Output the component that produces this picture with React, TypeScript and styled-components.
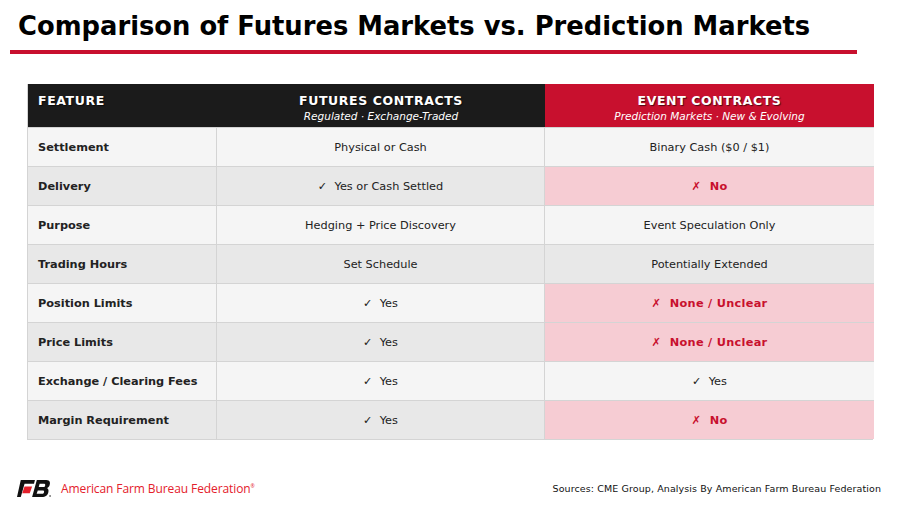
import React from 'react';
import styled, {createGlobalStyle} from 'styled-components';

const GlobalStyle = createGlobalStyle`
	html, body {
		margin: 0;
		padding: 0;
		background: #ffffff;
	}
	body {
		font-family: 'DejaVu Sans', Verdana, sans-serif;
		color: #222222;
	}
`;

const RED = '#c8102e';

const Page = styled.div`
	width: 900px;
	height: 506px;
	box-sizing: border-box;
	display: flex;
	flex-direction: column;
	overflow: hidden;
`;

const Header = styled.header`
	padding: 8px 43px 0 10px;
`;

const Title = styled.h1`
	margin: 0 0 0 8px;
	font-size: 25.8px;
	font-weight: bold;
	color: #000000;
	line-height: 36px;
	letter-spacing: 0;
`;

const Rule = styled.div`
	height: 4px;
	background: ${RED};
	margin-top: 6px;
`;

const Table = styled.div`
	margin: 30px 27px 0 27px;
	display: grid;
	grid-template-columns: 189px 328px 329px;
	border: 1px solid #d4d4d4;
	border-top: none;
`;

const HeadCell = styled.div<{$tone: 'dark' | 'red'; $align: 'left' | 'center'}>`
	height: 43px;
	box-sizing: border-box;
	background: ${p => (p.$tone === 'dark' ? '#1b1b1b' : RED)};
	color: #ffffff;
	display: flex;
	flex-direction: column;
	align-items: ${p => (p.$align === 'left' ? 'flex-start' : 'center')};
	justify-content: flex-start;
	padding: ${p => (p.$align === 'left' ? '9px 0 0 10px' : '9px 0 0 0')};
`;

const HeadTitle = styled.span`
	font-size: 12.5px;
	font-weight: bold;
	letter-spacing: 0.6px;
	line-height: 16px;
	text-shadow: 1px 1px 1px rgba(0, 0, 0, 0.6);
`;

const HeadSub = styled.span`
	font-size: 10.5px;
	font-style: italic;
	line-height: 15px;
`;

const Cell = styled.div<{$shade: 'light' | 'dark' | 'pink'; $label?: boolean}>`
	height: 39px;
	box-sizing: border-box;
	border-top: 1px solid #d4d4d4;
	border-right: 1px solid #d4d4d4;
	display: flex;
	align-items: center;
	justify-content: ${p => (p.$label ? 'flex-start' : 'center')};
	padding-left: ${p => (p.$label ? '10px' : '0')};
	font-size: 11.3px;
	font-weight: ${p => (p.$label ? 'bold' : 'normal')};
	color: #222222;
	white-space: pre;
	background: ${p =>
		p.$shade === 'pink' ? '#f6ccd3' : p.$shade === 'dark' ? '#e8e8e8' : '#f5f5f5'};
	&:nth-child(3n) {
		border-right: none;
	}
`;

const Bad = styled.span`
	color: ${RED};
	font-weight: bold;
	letter-spacing: 0.3px;
`;

const Footer = styled.footer`
	margin-top: auto;
	height: 32px;
	display: flex;
	align-items: center;
	justify-content: space-between;
	padding: 0 19px 2px 17px;
`;

const Brand = styled.div`
	display: flex;
	align-items: center;
	gap: 10px;
`;

const BrandName = styled.span`
	font-family: 'Open Sans', 'Noto Sans', sans-serif;
	font-size: 12px;
	color: #e4202b;
	letter-spacing: -0.1px;
`;

const Sources = styled.span`
	font-size: 9.5px;
	color: #111111;
	letter-spacing: 0.1px;
`;

type Row = {
	label: string;
	futures: string;
	event: string;
	eventBad?: boolean;
};

const rows: Row[] = [
	{label: 'Settlement', futures: 'Physical or Cash', event: 'Binary Cash ($0 / $1)'},
	{label: 'Delivery', futures: '✓  Yes or Cash Settled', event: '✗  No', eventBad: true},
	{label: 'Purpose', futures: 'Hedging + Price Discovery', event: 'Event Speculation Only'},
	{label: 'Trading Hours', futures: 'Set Schedule', event: 'Potentially Extended'},
	{label: 'Position Limits', futures: '✓  Yes', event: '✗  None / Unclear', eventBad: true},
	{label: 'Price Limits', futures: '✓  Yes', event: '✗  None / Unclear', eventBad: true},
	{label: 'Exchange / Clearing Fees', futures: '✓  Yes', event: '✓  Yes'},
	{label: 'Margin Requirement', futures: '✓  Yes', event: '✗  No', eventBad: true},
];

const Logo = () => (
	<svg width='34' height='17' viewBox='0 0 36 18'>
		<polygon points='4,0 19,0 18,4 8,4 4,18 0,18' fill='#111' />
		<polygon points='8,7 16,7 13.5,14 5.5,14' fill='#e4202b' />
		<path d='M21,0 L31,0 C35,0 35.5,3 34.5,5.5 C34,7 33,8 31.5,8.5 C33,9 33.8,10.5 33.2,13 C32.5,16 30.5,18 26,18 L16,18 Z M24,4 L23,7.5 L28.5,7.5 C30,7.5 30.5,4 29,4 Z M22,11 L20.8,14.5 L27,14.5 C28.8,14.5 29.3,11 27.8,11 Z' fill='#111' fillRule='evenodd' />
		<circle cx='35' cy='17' r='0.8' fill='#111' />
	</svg>
);

const App = () => {
	return (
		<Page>
			<GlobalStyle />
			<Header>
				<Title>Comparison of Futures Markets vs. Prediction Markets</Title>
				<Rule />
			</Header>

			<Table>
				<HeadCell $tone='dark' $align='left'>
					<HeadTitle>FEATURE</HeadTitle>
				</HeadCell>
				<HeadCell $tone='dark' $align='center'>
					<HeadTitle>FUTURES CONTRACTS</HeadTitle>
					<HeadSub>Regulated · Exchange-Traded</HeadSub>
				</HeadCell>
				<HeadCell $tone='red' $align='center'>
					<HeadTitle>EVENT CONTRACTS</HeadTitle>
					<HeadSub>Prediction Markets · New &amp; Evolving</HeadSub>
				</HeadCell>

				{rows.map((row, i) => {
					const shade = i % 2 === 0 ? 'light' : 'dark';
					return (
						<React.Fragment key={row.label}>
							<Cell $shade={shade} $label>{row.label}</Cell>
							<Cell $shade={shade}>{row.futures}</Cell>
							<Cell $shade={row.eventBad ? 'pink' : shade}>
								{row.eventBad ? <Bad>{row.event}</Bad> : row.event}
							</Cell>
						</React.Fragment>
					);
				})}
			</Table>

			<Footer>
				<Brand>
					<Logo />
					<BrandName>American Farm Bureau Federation<sup style={{fontSize: 5}}>®</sup></BrandName>
				</Brand>
				<Sources>Sources: CME Group, Analysis By American Farm Bureau Federation</Sources>
			</Footer>
		</Page>
	);
};

export default App;
